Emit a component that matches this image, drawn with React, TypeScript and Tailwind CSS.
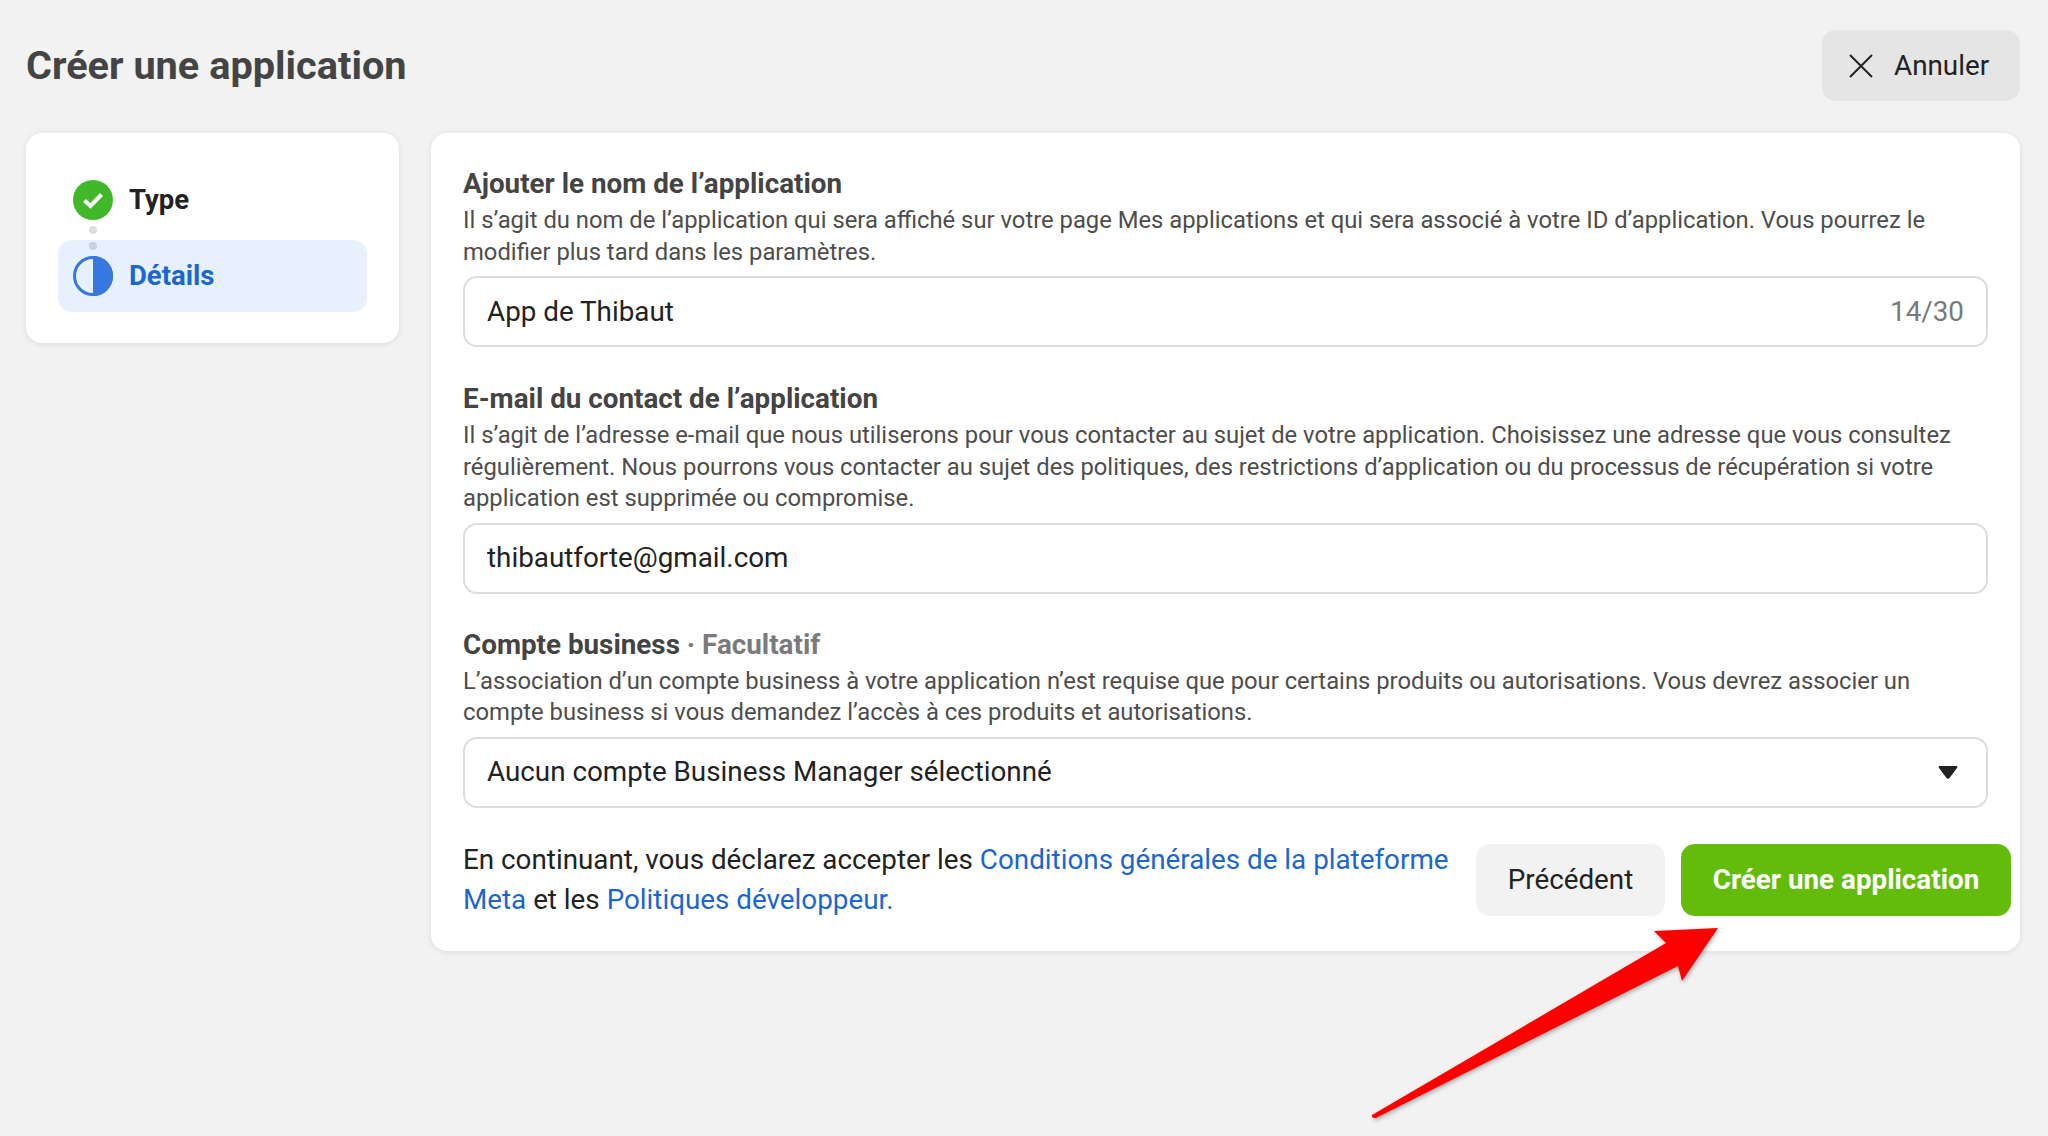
import React from 'react';

const labelCls = "text-[27.8px] leading-[32px] font-bold text-[#444444]";
const descCls = "mt-[5px] text-[23.8px] leading-[31.5px] text-[#4d4d4d]";
const inputCls = "h-[71px] rounded-[14px] border-2 border-[#dddddd] bg-white flex items-center justify-between pl-[22px] text-[27.8px] text-[#222222]";

const Field: React.FC<{ label: React.ReactNode; desc: React.ReactNode; children: React.ReactNode; inputTop: string }> = ({
  label,
  desc,
  children,
  inputTop,
}) => (
  <div className="mr-[23px]">
    <div className={labelCls}>{label}</div>
    <p className={descCls}>{desc}</p>
    <div className={`${inputCls} ${inputTop}`}>{children}</div>
  </div>
);

export default function App() {
  return (
    <div
      className="relative w-[2048px] h-[1136px] overflow-hidden bg-[#f2f2f2] pl-[26px] pr-[28px] pt-[30px]"
      style={{ fontFamily: 'Roboto, sans-serif' }}
    >
      {/* Header */}
      <div className="flex items-center justify-between h-[71px] mb-[32px]">
        <h1 className="text-[39.7px] font-bold text-[#444444]">Créer une application</h1>
        <button className="h-[71px] w-[198px] rounded-[14px] bg-[#e5e5e5] flex items-center pl-[27px] gap-[21px] text-[27.8px] text-[#222222]">
          <svg width="24" height="24" viewBox="0 0 24 24" fill="none" stroke="#222222" strokeWidth="2">
            <path d="M1 1 L23 23 M23 1 L1 23" />
          </svg>
          Annuler
        </button>
      </div>

      <div className="flex items-start gap-[32px]">
        {/* Steps */}
        <div className="w-[373px] h-[210px] shrink-0 rounded-[16px] bg-white shadow-[0_1px_6px_rgba(0,0,0,0.1)] px-[32px] pt-[47px]">
          <div className="flex items-center h-[40px] pl-[15px] gap-[16px] text-[27.5px] font-bold text-[#222222]">
            <svg width="40" height="40" viewBox="0 0 40 40" className="shrink-0">
              <circle cx="20" cy="20" r="20" fill="#42b72a" />
              <path d="M11.5 20.5 L17.5 26 L28.5 14.5" fill="none" stroke="white" strokeWidth="4" />
            </svg>
            Type
          </div>
          <div className="relative h-[72px] mt-[20px] rounded-[14px] bg-[#e7f1fe] flex items-center pl-[15px] gap-[16px] text-[27.5px] font-bold text-[#1b66d2]">
            <span className="absolute left-[31px] top-[-14px] w-[8px] h-[8px] rounded-full bg-[#dddddd]" />
            <span className="absolute left-[31px] top-[2px] w-[8px] h-[8px] rounded-full bg-[#c9d3e0]" />
            <svg width="40" height="40" viewBox="0 0 40 40" className="shrink-0">
              <circle cx="20" cy="20" r="18.5" fill="none" stroke="#3578e0" strokeWidth="3" />
              <path d="M20 0 A20 20 0 0 1 20 40 Z" fill="#3578e0" />
            </svg>
            Détails
          </div>
        </div>

        {/* Form */}
        <div className="flex-1 h-[818px] rounded-[16px] bg-white shadow-[0_1px_6px_rgba(0,0,0,0.1)] pl-[32px] pr-[9px] pt-[35px]">
          <Field
            label="Ajouter le nom de l’application"
            desc="Il s’agit du nom de l’application qui sera affiché sur votre page Mes applications et qui sera associé à votre ID d’application. Vous pourrez le modifier plus tard dans les paramètres."
            inputTop="mt-[8px]"
          >
            <span>App de Thibaut</span>
            <span className="pr-[22px] text-[#7a7a7a]">14/30</span>
          </Field>

          <div className="h-[36px]" />
          <Field
            label="E-mail du contact de l’application"
            desc="Il s’agit de l’adresse e-mail que nous utiliserons pour vous contacter au sujet de votre application. Choisissez une adresse que vous consultez régulièrement. Nous pourrons vous contacter au sujet des politiques, des restrictions d’application ou du processus de récupération si votre application est supprimée ou compromise."
            inputTop="mt-[8px]"
          >
            <span>thibautforte@gmail.com</span>
          </Field>

          <div className="h-[35px]" />
          <Field
            label={
              <>
                Compte business <span className="text-[#7a7a7a]">· Facultatif</span>
              </>
            }
            desc="L’association d’un compte business à votre application n’est requise que pour certains produits ou autorisations. Vous devrez associer un compte business si vous demandez l’accès à ces produits et autorisations."
            inputTop="mt-[8px]"
          >
            <span>Aucun compte Business Manager sélectionné</span>
            <svg width="20" height="13" viewBox="0 0 20 13" className="mr-[28px]">
              <path d="M1.5 0 H18.5 Q20 0 19 2 L11.5 12 Q10 13.5 8.5 12 L1 2 Q0 0 1.5 0 Z" fill="#222222" />
            </svg>
          </Field>

          {/* Footer */}
          <div className="flex items-start mt-[36px]">
            <p className="w-[1013px] -mt-[4px] pr-[20px] text-[27.8px] leading-[40px] text-[#222222]">
              En continuant, vous déclarez accepter les{' '}
              <span className="text-[#1b66d2]">Conditions générales de la plateforme Meta</span> et les{' '}
              <span className="text-[#1b66d2]">Politiques développeur.</span>
            </p>
            <button className="h-[72px] w-[189px] rounded-[14px] bg-[#f2f2f2] text-[27.8px] text-[#222222]">
              Précédent
            </button>
            <button className="ml-[16px] h-[72px] w-[330px] rounded-[14px] bg-[#63bc0b] text-[27.8px] font-bold text-white">
              Créer une application
            </button>
          </div>
        </div>
      </div>

      {/* Arrow annotation */}
      <svg
        className="absolute left-[1360px] top-[920px] drop-shadow-[1px_2px_2px_rgba(0,0,0,0.3)]"
        width="370"
        height="210"
        viewBox="1360 920 370 210"
      >
        <path d="M1718 928 L1654 931 L1666 943 L1372 1115 Q1371 1118 1376 1118 L1678 966 L1682 981 Z" fill="#ff0000" />
      </svg>
    </div>
  );
}
